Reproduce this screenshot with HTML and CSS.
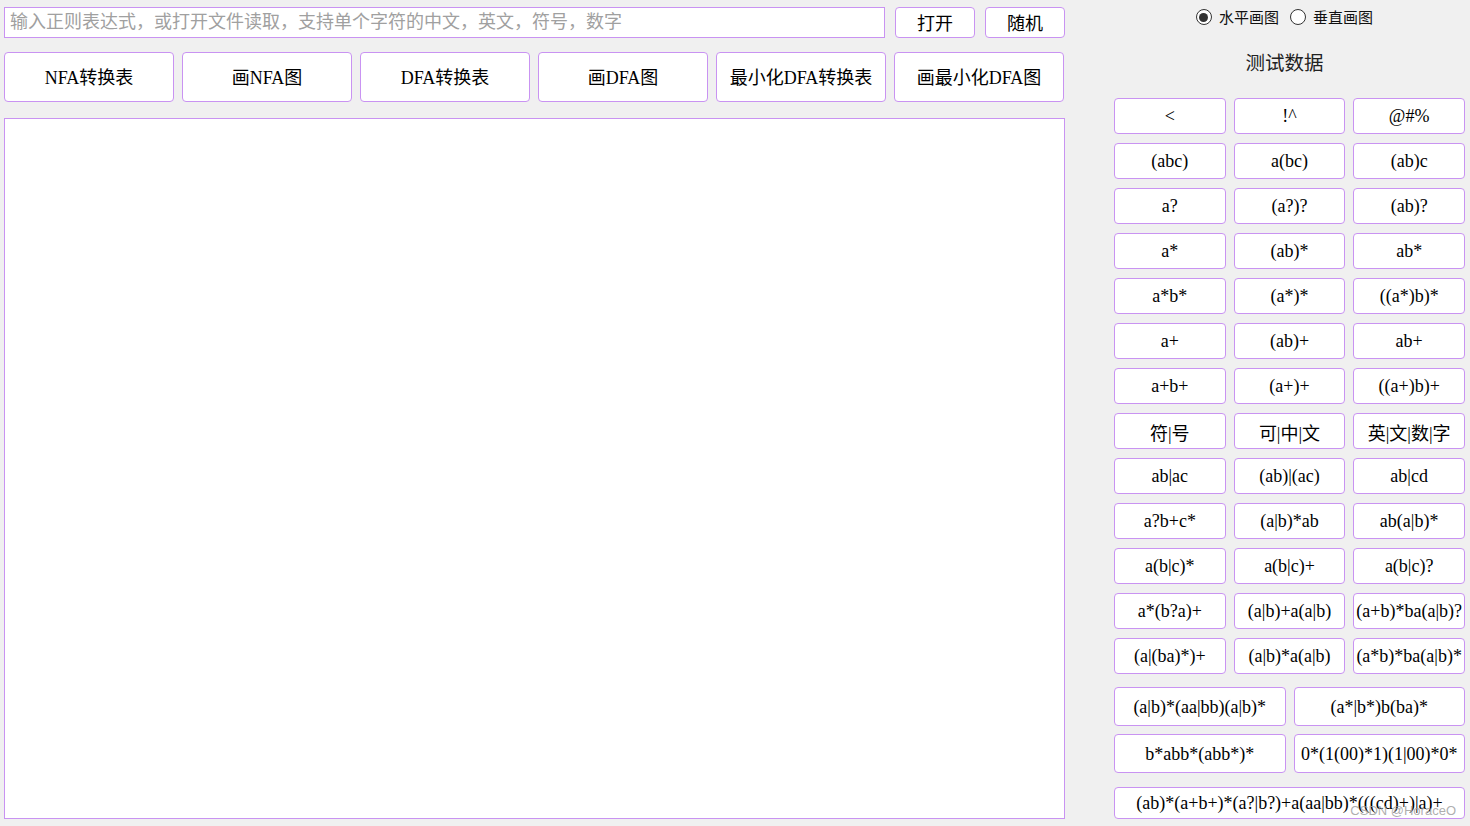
FILE: index.html
```html
<!DOCTYPE html>
<html lang="zh">
<head>
<meta charset="utf-8">
<link rel="stylesheet" href="styles.css">
</head>
<body>
<div class="app">
  <div class="left">
    <div class="toprow">
      <input class="regex" type="text" placeholder="输入正则表达式，或打开文件读取，支持单个字符的中文，英文，符号，数字">
      <button class="btn small">打开</button>
      <button class="btn small">随机</button>
    </div>
    <div class="navrow">
      <button class="btn nav">NFA转换表</button>
      <button class="btn nav">画NFA图</button>
      <button class="btn nav">DFA转换表</button>
      <button class="btn nav">画DFA图</button>
      <button class="btn nav">最小化DFA转换表</button>
      <button class="btn nav">画最小化DFA图</button>
    </div>
    <div class="canvas"></div>
  </div>
  <div class="right">
    <div class="radios">
      <label class="radio"><span class="dot on"></span>水平画图</label>
      <label class="radio"><span class="dot"></span>垂直画图</label>
    </div>
    <div class="title">测试数据</div>
    <div class="grid3">
      <button class="btn t">&lt;</button>
      <button class="btn t">!^</button>
      <button class="btn t">@#%</button>
      <button class="btn t">(abc)</button>
      <button class="btn t">a(bc)</button>
      <button class="btn t">(ab)c</button>
      <button class="btn t">a?</button>
      <button class="btn t">(a?)?</button>
      <button class="btn t">(ab)?</button>
      <button class="btn t">a*</button>
      <button class="btn t">(ab)*</button>
      <button class="btn t">ab*</button>
      <button class="btn t">a*b*</button>
      <button class="btn t">(a*)*</button>
      <button class="btn t">((a*)b)*</button>
      <button class="btn t">a+</button>
      <button class="btn t">(ab)+</button>
      <button class="btn t">ab+</button>
      <button class="btn t">a+b+</button>
      <button class="btn t">(a+)+</button>
      <button class="btn t">((a+)b)+</button>
      <button class="btn t">符|号</button>
      <button class="btn t">可|中|文</button>
      <button class="btn t">英|文|数|字</button>
      <button class="btn t">ab|ac</button>
      <button class="btn t">(ab)|(ac)</button>
      <button class="btn t">ab|cd</button>
      <button class="btn t">a?b+c*</button>
      <button class="btn t">(a|b)*ab</button>
      <button class="btn t">ab(a|b)*</button>
      <button class="btn t">a(b|c)*</button>
      <button class="btn t">a(b|c)+</button>
      <button class="btn t">a(b|c)?</button>
      <button class="btn t">a*(b?a)+</button>
      <button class="btn t">(a|b)+a(a|b)</button>
      <button class="btn t">(a+b)*ba(a|b)?</button>
      <button class="btn t">(a|(ba)*)+</button>
      <button class="btn t">(a|b)*a(a|b)</button>
      <button class="btn t">(a*b)*ba(a|b)*</button>
    </div>
    <div class="grid2">
      <button class="btn t2">(a|b)*(aa|bb)(a|b)*</button>
      <button class="btn t2">(a*|b*)b(ba)*</button>
      <button class="btn t2">b*abb*(abb*)*</button>
      <button class="btn t2">0*(1(00)*1)(1|00)*0*</button>
    </div>
    <button class="btn wide">(ab)*(a+b+)*(a?|b?)+a(aa|bb)*(((cd)+)|a)+</button>
  </div>
</div>
<div class="watermark">CSDN @HoraceO</div>
</body>
</html>
```

FILE: styles.css
```css
html, body {
  margin: 0;
  padding: 0;
  background: #f0f0f0;
  width: 1470px;
  height: 826px;
  overflow: hidden;
}
body {
  font-family: "Liberation Serif", "Noto Sans CJK SC", serif;
  color: #000;
  position: relative;
}
.app {
  display: flex;
  align-items: flex-start;
}
.left {
  width: 1061px;
  margin-left: 4px;
  padding-top: 7px;
  display: flex;
  flex-direction: column;
}
.btn {
  background: #fff;
  border: 1px solid #c993f2;
  border-radius: 4px;
  font-family: "Liberation Serif", "Noto Sans CJK SC", serif;
  font-size: 18px;
  color: #000;
  padding: 0;
  margin: 0;
  white-space: nowrap;
  overflow: hidden;
  box-sizing: border-box;
}
.toprow {
  display: flex;
  gap: 10px;
  height: 31px;
}
.regex {
  width: 881px;
  height: 31px;
  box-sizing: border-box;
  border: 1px solid #c993f2;
  border-radius: 0;
  background: #fff;
  padding: 0 5px;
  margin: 0;
  font-family: "Liberation Serif", "Noto Sans CJK SC", serif;
  font-size: 18px;
  outline: none;
}
.regex::placeholder {
  color: #a0a0a0;
}
.small {
  width: 80px;
  height: 31px;
  padding-bottom: 2px;
}
.navrow {
  display: flex;
  gap: 8px;
  margin-top: 14px;
}
.nav {
  width: 170px;
  height: 50px;
  padding-bottom: 3px;
}
.canvas {
  margin-top: 16px;
  height: 701px;
  background: #fff;
  border: 1px solid #c993f2;
  box-sizing: border-box;
}
.right {
  width: 351px;
  margin-left: 49px;
  display: flex;
  flex-direction: column;
}
.radios {
  display: flex;
  justify-content: center;
  gap: 11px;
  margin-top: 8px;
  height: 18px;
  padding-right: 10px;
}
.radio {
  display: flex;
  align-items: center;
  gap: 7px;
  font-family: "Noto Sans CJK SC", sans-serif;
  font-size: 15px;
  line-height: 18px;
  color: #111;
}
.dot {
  width: 16px;
  height: 16px;
  border: 1.5px solid #333;
  border-radius: 50%;
  background: #fff;
  box-sizing: border-box;
  display: flex;
  align-items: center;
  justify-content: center;
}
.dot.on::after {
  content: "";
  width: 9px;
  height: 9px;
  border-radius: 50%;
  background: #333;
}
.title {
  text-align: center;
  font-size: 19.5px;
  margin-top: 24px;
  height: 27px;
  line-height: 27px;
  color: #222;
  padding-right: 10px;
}
.grid3 {
  margin-top: 21px;
  display: grid;
  grid-template-columns: repeat(3, 1fr);
  column-gap: 8px;
  row-gap: 9px;
}
.t {
  height: 36px;
  padding-top: 1px;
}
.grid2 {
  margin-top: 13px;
  display: grid;
  grid-template-columns: repeat(2, 1fr);
  column-gap: 8px;
  row-gap: 8px;
}
.t2 {
  height: 39px;
  padding-top: 1px;
}
.wide {
  margin-top: 14px;
  height: 32px;
  width: 351px;
  line-height: 30px;
}
.watermark {
  position: absolute;
  right: 14px;
  bottom: 8px;
  font-family: "Liberation Sans", "Noto Sans", sans-serif;
  font-size: 13px;
  color: rgba(160, 160, 160, 0.85);
}
```
